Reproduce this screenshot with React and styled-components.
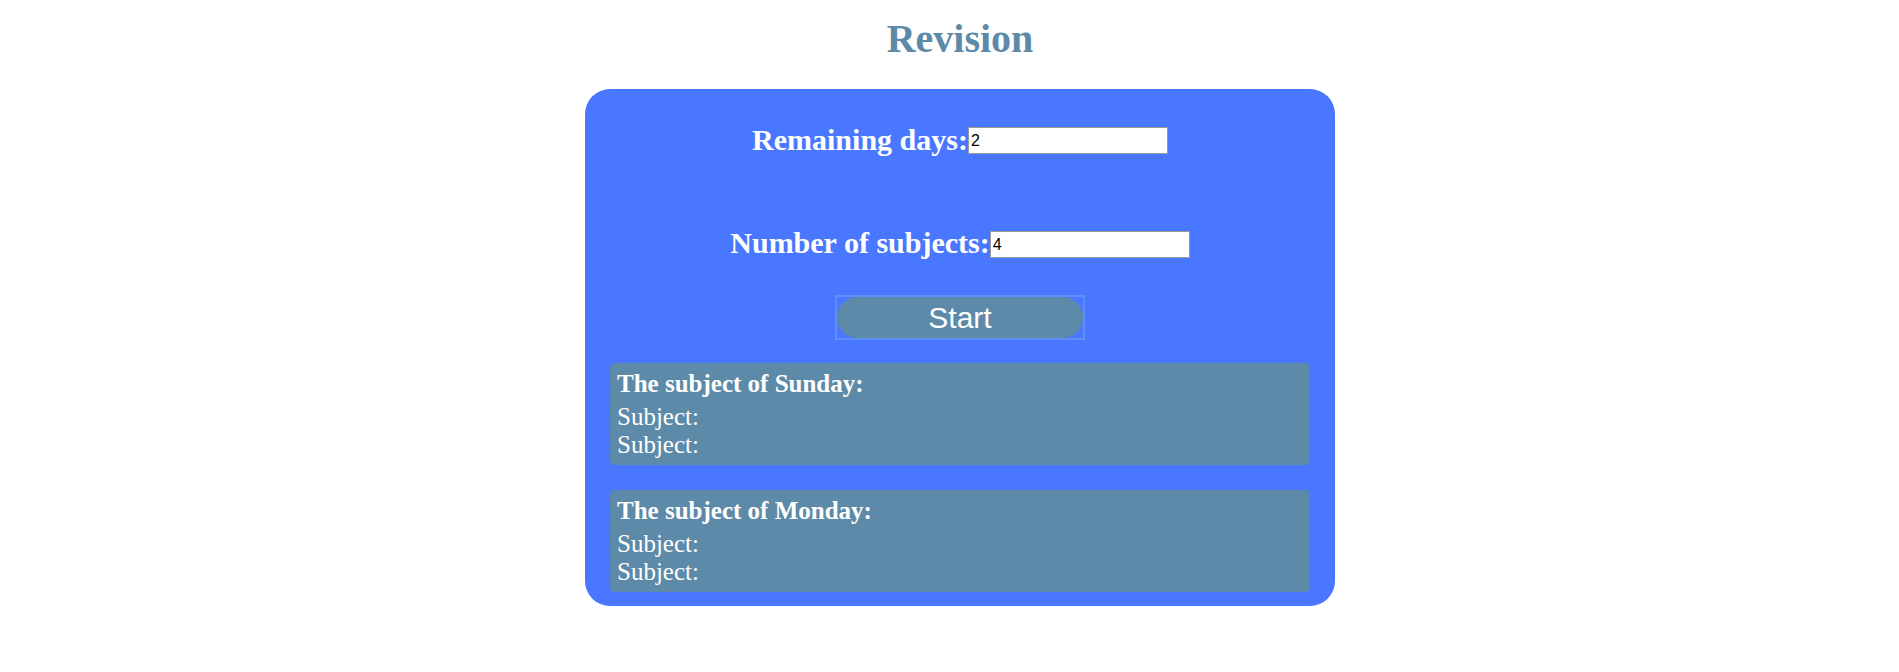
import React from "react";
import styled, { createGlobalStyle } from "styled-components";

const GlobalStyle = createGlobalStyle`
  html, body {
    margin: 0;
    padding: 0;
    background: #ffffff;
    font-family: "Liberation Serif", "Times New Roman", serif;
  }
`;

const Page = styled.div`
  display: flex;
  flex-direction: column;
  align-items: center;
  padding-left: 21px;
  padding-top: 16px;
`;

const Title = styled.h1`
  margin: 0 0 27px;
  font-family: "Liberation Serif", "Times New Roman", serif;
  font-size: 40px;
  line-height: 46px;
  font-weight: bold;
  color: #5d8aa8;
`;

const Card = styled.div`
  box-sizing: border-box;
  width: 750px;
  background: #4a77ff;
  border-radius: 25px;
  padding: 34px 25px 14px;
  display: flex;
  flex-direction: column;
  align-items: center;
`;

const Row = styled.div`
  display: flex;
  justify-content: center;
  align-items: flex-start;
  margin-bottom: ${(p) => p.$gap || 0}px;
`;

const Label = styled.label`
  font-family: "Liberation Serif", "Times New Roman", serif;
  font-size: 30px;
  font-weight: bold;
  line-height: 34px;
  color: #ffffff;
  white-space: nowrap;
`;

const Input = styled.input`
  box-sizing: border-box;
  width: 200px;
  height: 27px;
  margin: ${(p) => p.$offset}px 0 0;
  padding: 0 2px;
  border: 1px solid #9a9a9a;
  background: #ffffff;
  font-family: "Liberation Sans", Arial, sans-serif;
  font-size: 16px;
  color: #000;
  outline: none;
`;

const ButtonFrame = styled.div`
  border: 2px solid #5e8ef8;
  margin-bottom: 23px;
  display: flex;
`;

const StartButton = styled.button`
  width: 246px;
  height: 41px;
  border: none;
  border-radius: 21px;
  background: #5d8aa8;
  color: #ffffff;
  font-family: "Liberation Sans", Arial, sans-serif;
  font-size: 30px;
  line-height: 41px;
  padding: 0;
  cursor: pointer;
`;

const DayList = styled.div`
  align-self: stretch;
  display: flex;
  flex-direction: column;
  gap: 25px;
`;

const DayBox = styled.section`
  background: #5d8aa8;
  border-radius: 5px;
  padding: 6px 7px 6px;
  color: #ffffff;
`;

const DayTitle = styled.h3`
  margin: 0 0 5px;
  font-family: "Liberation Serif", "Times New Roman", serif;
  font-size: 25px;
  font-weight: bold;
  line-height: 29px;
`;

const SubjectLine = styled.div`
  font-family: "Liberation Serif", "Times New Roman", serif;
  font-size: 25px;
  line-height: 28px;
`;

const days = ["Sunday", "Monday"];

export default function App() {
  return (
    <>
      <GlobalStyle />
      <Page>
        <Title>Revision</Title>
        <Card>
          <Row $gap={69}>
            <Label htmlFor="days">Remaining days:</Label>
            <Input id="days" type="text" defaultValue="2" $offset={4} />
          </Row>
          <Row $gap={35}>
            <Label htmlFor="subjects">Number of subjects:</Label>
            <Input id="subjects" type="text" defaultValue="4" $offset={5} />
          </Row>
          <ButtonFrame>
            <StartButton type="button">Start</StartButton>
          </ButtonFrame>
          <DayList>
            {days.map((d) => (
              <DayBox key={d}>
                <DayTitle>The subject of {d}:</DayTitle>
                <SubjectLine>Subject:</SubjectLine>
                <SubjectLine>Subject:</SubjectLine>
              </DayBox>
            ))}
          </DayList>
        </Card>
      </Page>
    </>
  );
}
